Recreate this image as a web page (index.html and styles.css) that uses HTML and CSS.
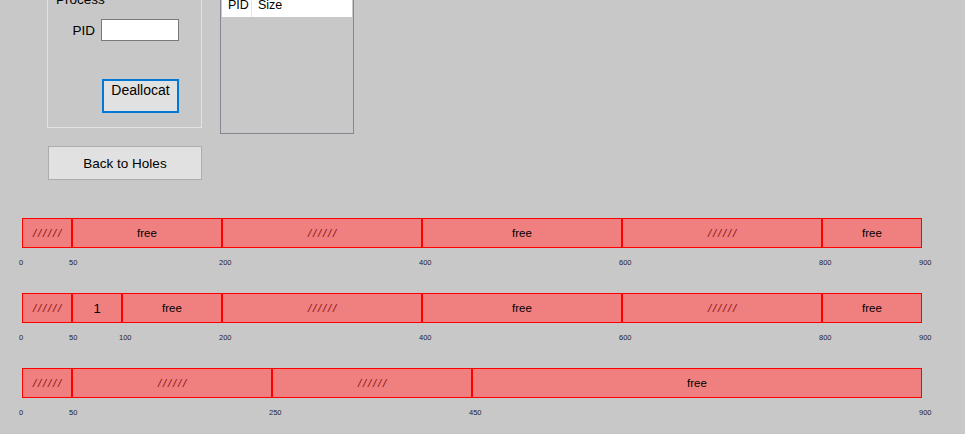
FILE: index.html
```html
<!DOCTYPE html>
<html>
<head>
<meta charset="utf-8">
<link rel="stylesheet" href="styles.css">
</head>
<body>
<div class="top">
  <div class="left-col">
    <div class="groupbox">
      <div class="gb-title">Process</div>
      <div class="pid-row">
        <span class="pid-label">PID</span>
        <span class="textbox"></span>
      </div>
      <div class="btn btn-focus">Deallocat</div>
    </div>
    <div class="btn btn-back">Back to Holes</div>
  </div>
  <div class="listview">
    <div class="lv-header">
      <div class="lv-col lv-col1">PID</div>
      <div class="lv-col lv-col2">Size</div>
    </div>
  </div>
</div>

<div class="bars">
  <div class="row">
    <div class="bar">
      <div class="blk used" style="width:50px"><span>//////</span></div>
      <div class="blk" style="width:150px">free</div>
      <div class="blk used" style="width:200px"><span>//////</span></div>
      <div class="blk" style="width:200px">free</div>
      <div class="blk used" style="width:200px"><span>//////</span></div>
      <div class="blk" style="width:100px">free</div>
    </div>
    <div class="axis">
      <span class="tick" style="left:0px">0</span>
      <span class="tick" style="left:50px">50</span>
      <span class="tick" style="left:200px">200</span>
      <span class="tick" style="left:400px">400</span>
      <span class="tick" style="left:600px">600</span>
      <span class="tick" style="left:800px">800</span>
      <span class="tick" style="left:900px">900</span>
    </div>
  </div>
  <div class="row">
    <div class="bar">
      <div class="blk used" style="width:50px"><span>//////</span></div>
      <div class="blk proc" style="width:50px">1</div>
      <div class="blk" style="width:100px">free</div>
      <div class="blk used" style="width:200px"><span>//////</span></div>
      <div class="blk" style="width:200px">free</div>
      <div class="blk used" style="width:200px"><span>//////</span></div>
      <div class="blk" style="width:100px">free</div>
    </div>
    <div class="axis">
      <span class="tick" style="left:0px">0</span>
      <span class="tick" style="left:50px">50</span>
      <span class="tick" style="left:100px">100</span>
      <span class="tick" style="left:200px">200</span>
      <span class="tick" style="left:400px">400</span>
      <span class="tick" style="left:600px">600</span>
      <span class="tick" style="left:800px">800</span>
      <span class="tick" style="left:900px">900</span>
    </div>
  </div>
  <div class="row">
    <div class="bar">
      <div class="blk used" style="width:50px"><span>//////</span></div>
      <div class="blk used" style="width:200px"><span>//////</span></div>
      <div class="blk used" style="width:200px"><span>//////</span></div>
      <div class="blk" style="width:450px">free</div>
    </div>
    <div class="axis">
      <span class="tick" style="left:0px">0</span>
      <span class="tick" style="left:50px">50</span>
      <span class="tick" style="left:250px">250</span>
      <span class="tick" style="left:450px">450</span>
      <span class="tick" style="left:900px">900</span>
    </div>
  </div>
</div>
</body>
</html>
```

FILE: styles.css
```css
html, body {
  margin: 0;
  padding: 0;
}
body {
  background: #c8c8c8;
  font-family: "Liberation Sans", Arial, sans-serif;
  color: #000;
  width: 965px;
  height: 434px;
  overflow: hidden;
}

.top {
  display: flex;
  align-items: flex-start;
  gap: 18px;
  padding-left: 47px;
  margin-top: -12px;
}

.left-col {
  display: flex;
  flex-direction: column;
  width: 155px;
}

.groupbox {
  box-sizing: border-box;
  width: 155px;
  height: 140px;
  border: 1px solid #e2e2e2;
  padding: 3px 0 0 8px;
  font-size: 13.5px;
}

.gb-title {
  height: 16px;
  line-height: 16px;
}

.pid-row {
  display: flex;
  align-items: center;
  margin-top: 11px;
  margin-left: -8px;
  gap: 6px;
}
.pid-label {
  width: 47px;
  text-align: right;
  line-height: 16px;
  padding-top: 1px;
}
.textbox {
  box-sizing: border-box;
  width: 78px;
  height: 22px;
  background: #fff;
  border: 1px solid #7a7a7a;
}

.btn {
  box-sizing: border-box;
  background: #e1e1e1;
  border: 1px solid #adadad;
  font-size: 13.5px;
  line-height: 16px;
  text-align: center;
}
.btn-focus {
  width: 77px;
  height: 34px;
  margin-top: 38px;
  margin-left: 46px;
  border: 2px solid #0078d7;
  padding-top: 1px;
  font-size: 14px;
}
.btn-back {
  width: 154px;
  height: 34px;
  margin-top: 18px;
  margin-left: 1px;
  display: flex;
  align-items: center;
  justify-content: center;
  padding-top: 1px;
}

.listview {
  box-sizing: border-box;
  width: 134px;
  height: 143px;
  margin-top: 3px;
  border: 1px solid #828790;
  padding: 1px;
}
.lv-header {
  display: flex;
  height: 24px;
  background: #fff;
  font-size: 12.5px;
}
.lv-col {
  display: flex;
  align-items: center;
  padding-left: 6px;
  box-sizing: border-box;
}
.lv-col1 {
  width: 30px;
  border-right: 1px solid #e5e5e5;
}
.lv-col2 {
  flex: 1;
}

.bars {
  margin-top: 38px;
  padding-left: 22px;
}
.row {
  height: 75px;
}
.bar {
  display: flex;
  height: 30px;
}
.blk {
  box-sizing: border-box;
  height: 30px;
  border: 1px solid #ff0000;
  background: #f08080;
  display: flex;
  align-items: center;
  justify-content: center;
  font-size: 11.5px;
  color: #000;
}
.blk.used span {
  font-style: italic;
  color: #8b1010;
  letter-spacing: 1.8px;
  margin-right: -1.8px;
}
.blk.proc {
  font-size: 13px;
}

.axis {
  position: relative;
  height: 45px;
}
.tick {
  position: absolute;
  top: 11px;
  margin-left: -3px;
  font-size: 7.5px;
  line-height: 8px;
  color: #222233;
}
```
